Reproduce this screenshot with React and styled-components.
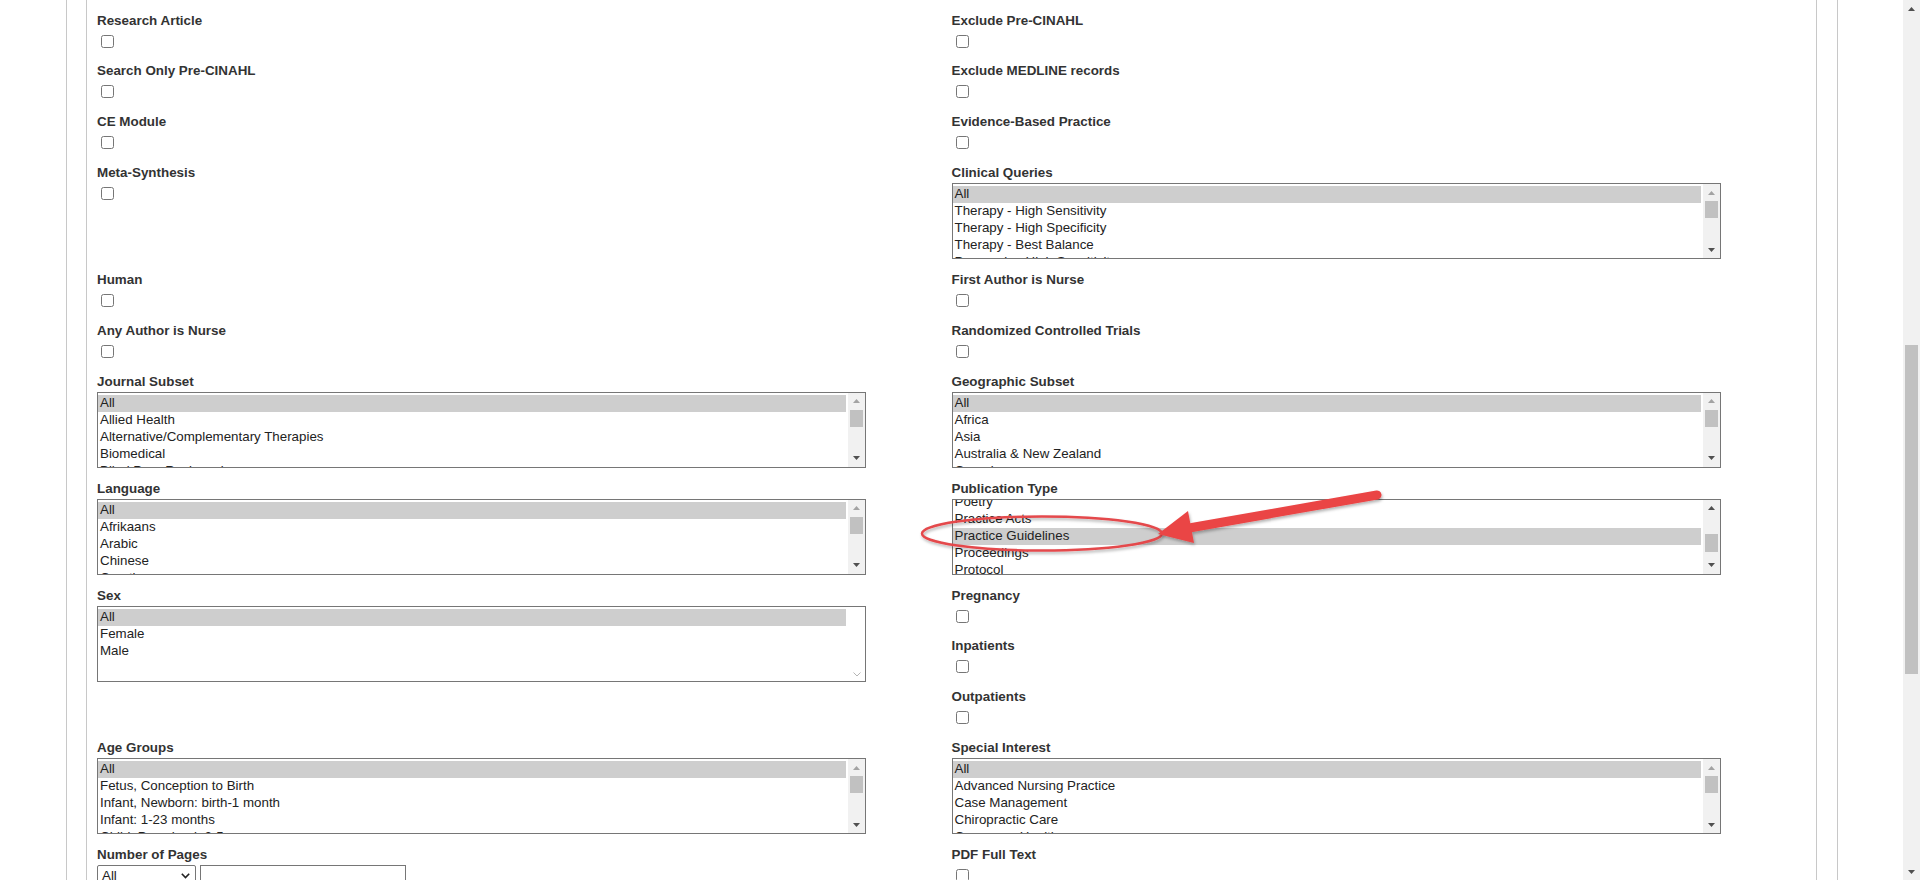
import React from "react";
import styled, { createGlobalStyle } from "styled-components";

const GlobalStyle = createGlobalStyle`
  html, body {
    margin: 0;
    padding: 0;
    background: #fff;
    overflow: hidden;
  }
  body {
    font-family: "Liberation Sans", Arial, sans-serif;
  }
`;

// each cell is one field, or a list of fields stacked in the same column
const rows = [
  [{ type: "check", label: "Research Article" }, { type: "check", label: "Exclude Pre-CINAHL" }],
  [{ type: "check", label: "Search Only Pre-CINAHL" }, { type: "check", label: "Exclude MEDLINE records" }],
  [{ type: "check", label: "CE Module" }, { type: "check", label: "Evidence-Based Practice" }],
  [
    { type: "check", label: "Meta-Synthesis" },
    {
      type: "list",
      label: "Clinical Queries",
      options: ["All", "Therapy - High Sensitivity", "Therapy - High Specificity", "Therapy - Best Balance", "Prognosis - High Sensitivity"],
      selected: 0,
    },
  ],
  [{ type: "check", label: "Human" }, { type: "check", label: "First Author is Nurse" }],
  [{ type: "check", label: "Any Author is Nurse" }, { type: "check", label: "Randomized Controlled Trials" }],
  [
    {
      type: "list",
      label: "Journal Subset",
      options: ["All", "Allied Health", "Alternative/Complementary Therapies", "Biomedical", "Blind Peer Reviewed"],
      selected: 0,
    },
    {
      type: "list",
      label: "Geographic Subset",
      options: ["All", "Africa", "Asia", "Australia & New Zealand", "Canada"],
      selected: 0,
    },
  ],
  [
    {
      type: "list",
      label: "Language",
      options: ["All", "Afrikaans", "Arabic", "Chinese", "Croatian"],
      selected: 0,
    },
    {
      type: "list",
      label: "Publication Type",
      options: ["Poetry", "Practice Acts", "Practice Guidelines", "Proceedings", "Protocol", "Questionnaire/Scale"],
      selected: 2,
      scroll: 8,
      thumbTop: 17,
      thumbH: 18,
    },
  ],
  [
    { type: "list", label: "Sex", options: ["All", "Female", "Male"], selected: 0, idle: true },
    [
      { type: "check", label: "Pregnancy" },
      { type: "check", label: "Inpatients" },
      { type: "check", label: "Outpatients" },
    ],
  ],
  [
    {
      type: "list",
      label: "Age Groups",
      options: ["All", "Fetus, Conception to Birth", "Infant, Newborn: birth-1 month", "Infant: 1-23 months", "Child, Preschool: 2-5 years"],
      selected: 0,
    },
    {
      type: "list",
      label: "Special Interest",
      options: ["All", "Advanced Nursing Practice", "Case Management", "Chiropractic Care", "Consumer Health"],
      selected: 0,
    },
  ],
  [{ type: "pages", label: "Number of Pages" }, { type: "check", label: "PDF Full Text" }],
];

function Arrow({ up, light }) {
  return (
    <svg width="7" height="4" viewBox="0 0 7 4">
      <polygon points={up ? "0,4 7,4 3.5,0" : "0,0 7,0 3.5,4"} fill={light ? "#a3a3a3" : "#505050"} />
    </svg>
  );
}

function ListBox({ options, selected, scroll = 0, thumbTop = 0, thumbH = 17, idle }) {
  return (
    <Box>
      <Options>
        <OptionStack style={{ marginTop: -scroll }}>
          {options.map((o, i) => (
            <Option key={o} $on={i === selected}>
              {o}
            </Option>
          ))}
        </OptionStack>
      </Options>
      {idle ? (
        <IdleBar>
          <svg width="8" height="5" viewBox="0 0 8 5">
            <path d="M0.5 0.5 L4 4 L7.5 0.5" fill="none" stroke="#b5b5b5" strokeWidth="1" />
          </svg>
        </IdleBar>
      ) : (
        <ScrollBar>
          <ArrowBtn>
            <Arrow up light={thumbTop === 0} />
          </ArrowBtn>
          <Track>
            <Thumb style={{ marginTop: thumbTop, height: thumbH }} />
          </Track>
          <ArrowBtn>
            <Arrow />
          </ArrowBtn>
        </ScrollBar>
      )}
    </Box>
  );
}

function Field({ f }) {
  if (f.type === "check") {
    return (
      <CheckField>
        <Label>{f.label}</Label>
        <Check type="checkbox" readOnly />
      </CheckField>
    );
  }
  if (f.type === "pages") {
    return (
      <ListField>
        <Label>{f.label}</Label>
        <PagesRow>
          <FakeSelect>
            <span>All</span>
            <svg width="9" height="6" viewBox="0 0 9 6">
              <path d="M0.8 0.8 L4.5 4.6 L8.2 0.8" fill="none" stroke="#222" strokeWidth="1.6" />
            </svg>
          </FakeSelect>
          <TextBox type="text" readOnly />
        </PagesRow>
      </ListField>
    );
  }
  return (
    <ListField>
      <Label>{f.label}</Label>
      <ListBox {...f} />
    </ListField>
  );
}

export default function App() {
  return (
    <>
      <GlobalStyle />
      <Screen>
        <Main>
          <Frame>
            <Form>
              {rows.map((row, r) => (
                <Row key={r}>
                  {row.map((cell, c) => (
                    <Cell key={c}>
                      {Array.isArray(cell) ? cell.map((f) => <Field key={f.label} f={f} />) : <Field f={cell} />}
                    </Cell>
                  ))}
                </Row>
              ))}
            </Form>
          </Frame>
          <Callout width="520" height="130" viewBox="0 0 520 130">
            <defs>
              <filter id="shade" x="-10%" y="-40%" width="120%" height="180%">
                <feDropShadow dx="1" dy="2" stdDeviation="1.4" floodColor="#000" floodOpacity="0.3" />
              </filter>
            </defs>
            <ellipse cx="142" cy="73.5" rx="120" ry="17" fill="none" stroke="#e4484c" strokeWidth="2.5" filter="url(#shade)" />
            <g filter="url(#shade)">
              <line x1="477" y1="35" x2="292" y2="67.5" stroke="#ea4545" strokeWidth="9" strokeLinecap="round" />
              <polygon points="258,74 294,83 288,51" fill="#ea4545" />
            </g>
          </Callout>
        </Main>
        <PageRail>
          <RailBtn>
            <Arrow up />
          </RailBtn>
          <Track>
            <RailThumb style={{ marginTop: 328, height: 329 }} />
          </Track>
          <RailBtn>
            <Arrow />
          </RailBtn>
        </PageRail>
      </Screen>
    </>
  );
}

const Screen = styled.div`
  display: flex;
  height: 880px;
  width: 1920px;
  overflow: hidden;
`;
const Main = styled.div`
  flex: 1;
  position: relative;
  overflow: hidden;
`;
const Frame = styled.div`
  margin: 0 65px 0 66px;
  border-left: 1px solid #c8c8c8;
  border-right: 1px solid #c8c8c8;
  padding: 0 20px 0 19px;
  min-height: 880px;
`;
const Form = styled.div`
  border-left: 1px solid #c8c8c8;
  border-right: 1px solid #c8c8c8;
  padding: 12.6px 10px 0;
  min-height: 880px;
  box-sizing: border-box;
`;
const Row = styled.div`
  display: grid;
  grid-template-columns: 1fr 1fr;
  align-items: start;
`;
const Cell = styled.div`
  display: flex;
  flex-direction: column;
`;
const Label = styled.div`
  font-size: 13.4px;
  line-height: 15px;
  font-weight: bold;
  color: #333;
  white-space: nowrap;
`;
const CheckField = styled.div`
  height: 50.85px;
`;
const Check = styled.input`
  display: block;
  width: 13px;
  height: 13px;
  margin: 7px 0 0 4px;
`;
const ListField = styled.div`
  height: 106.95px;
  display: flex;
  flex-direction: column;
  gap: 3px;
`;
const Box = styled.div`
  width: 90%;
  height: 76px;
  box-sizing: border-box;
  border: 1px solid #767676;
  display: flex;
  background: #fff;
`;
const Options = styled.div`
  flex: 1;
  overflow: hidden;
  padding: 2px 2px 0 0;
`;
const OptionStack = styled.div`
  display: flex;
  flex-direction: column;
`;
const Option = styled.div`
  height: 17px;
  box-sizing: border-box;
  line-height: 16px;
  padding: 0 2px 1px;
  font-size: 13.33px;
  color: #222;
  white-space: nowrap;
  background: ${(p) => (p.$on ? "#cecece" : "transparent")};
`;
const ScrollBar = styled.div`
  width: 17px;
  background: #f1f1f1;
  display: flex;
  flex-direction: column;
`;
const IdleBar = styled.div`
  width: 17px;
  display: flex;
  align-items: flex-end;
  justify-content: center;
  padding-bottom: 4px;
  box-sizing: border-box;
`;
const ArrowBtn = styled.div`
  height: 17px;
  flex: none;
  display: flex;
  align-items: center;
  justify-content: center;
`;
const Track = styled.div`
  flex: 1;
  display: flex;
  flex-direction: column;
  align-items: center;
`;
const Thumb = styled.div`
  width: 13px;
  background: #c1c1c1;
  flex: none;
`;
const PagesRow = styled.div`
  display: flex;
  gap: 4px;
  align-items: flex-start;
`;
const FakeSelect = styled.div`
  width: 99px;
  height: 21px;
  box-sizing: border-box;
  border: 1px solid #767676;
  border-radius: 2px;
  display: flex;
  align-items: center;
  justify-content: space-between;
  padding: 0 5px 0 4px;
  font-size: 13.33px;
  color: #222;
`;
const TextBox = styled.input`
  width: 206px;
  height: 21px;
  box-sizing: border-box;
  border: 1px solid #767676;
  margin: 0;
  padding: 1px 2px;
  font-size: 13.33px;
  font-family: "Liberation Sans", Arial, sans-serif;
`;
const Callout = styled.svg`
  position: absolute;
  left: 900px;
  top: 460px;
  pointer-events: none;
  overflow: visible;
`;
const PageRail = styled.div`
  width: 17px;
  flex: none;
  background: #f1f1f1;
  display: flex;
  flex-direction: column;
`;
const RailBtn = styled.div`
  height: 17px;
  flex: none;
  display: flex;
  align-items: center;
  justify-content: center;
`;
const RailThumb = styled.div`
  width: 13px;
  flex: none;
  background: #c1c1c1;
`;
